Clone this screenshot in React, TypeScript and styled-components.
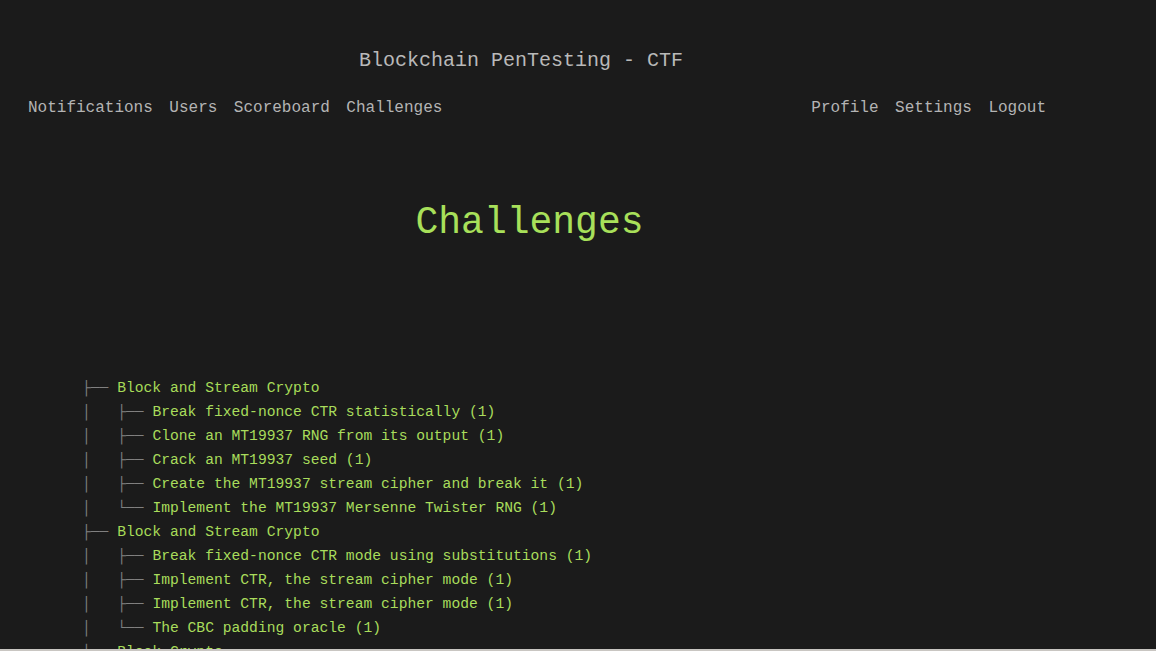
import React from "react";
import styled, { createGlobalStyle } from "styled-components";

const Global = createGlobalStyle`
  html, body {
    margin: 0;
    padding: 0;
    background: #1b1b1b;
  }
  body {
    font-family: "Liberation Mono", "DejaVu Sans Mono", monospace;
    overflow: hidden;
  }
`;

const Page = styled.div`
  min-height: 651px;
  background: #1b1b1b;
`;

const Header = styled.header`
  display: flex;
  flex-direction: column;
  padding-top: 49px;
`;

const SiteTitle = styled.div`
  width: 1042px;
  text-align: center;
  font-size: 20px;
  line-height: 24px;
  color: #b9b9b9;
`;

const NavBar = styled.nav`
  display: flex;
  justify-content: space-between;
  width: 1018px;
  margin-left: 28px;
  margin-top: 25px;
`;

const NavGroup = styled.div`
  display: flex;
  gap: 16.5px;
`;

const NavLink = styled.a`
  font-size: 16px;
  line-height: 20px;
  color: #b4b4b4;
  text-decoration: none;
`;

const Heading = styled.h1`
  margin: 82px 0 0;
  width: 1059px;
  text-align: center;
  font-size: 38px;
  line-height: 46px;
  font-weight: normal;
  color: #a8e05a;
`;

const Tree = styled.div`
  margin-top: 130px;
  padding-left: 82px;
  font-size: 14.67px;
  line-height: 24px;
  white-space: pre;
`;

const Row = styled.div`
  height: 24px;
`;

const Branch = styled.span`
  color: #808080;
`;

const Label = styled.span<{ $cat?: boolean }>`
  color: ${(p) => (p.$cat ? "#a7dc58" : "#a9dd5c")};
`;

const BottomEdge = styled.div`
  position: fixed;
  left: 0;
  right: 0;
  bottom: 0;
  height: 2px;
  background: #c9c6c2;
`;

type Cat = { name: string; items: string[] };

const data: Cat[] = [
  {
    name: "Block and Stream Crypto",
    items: [
      "Break fixed-nonce CTR statistically (1)",
      "Clone an MT19937 RNG from its output (1)",
      "Crack an MT19937 seed (1)",
      "Create the MT19937 stream cipher and break it (1)",
      "Implement the MT19937 Mersenne Twister RNG (1)",
    ],
  },
  {
    name: "Block and Stream Crypto",
    items: [
      "Break fixed-nonce CTR mode using substitutions (1)",
      "Implement CTR, the stream cipher mode (1)",
      "Implement CTR, the stream cipher mode (1)",
      "The CBC padding oracle (1)",
    ],
  },
  {
    name: "Block Crypto",
    items: [
      "An ECB/CBC detection oracle (1)",
      "Byte-at-a-time ECB decryption (1)",
    ],
  },
];

export default function App() {
  return (
    <Page>
      <Global />
      <Header>
        <SiteTitle>Blockchain PenTesting - CTF</SiteTitle>
        <NavBar>
          <NavGroup>
            <NavLink>Notifications</NavLink>
            <NavLink>Users</NavLink>
            <NavLink>Scoreboard</NavLink>
            <NavLink>Challenges</NavLink>
          </NavGroup>
          <NavGroup>
            <NavLink>Profile</NavLink>
            <NavLink>Settings</NavLink>
            <NavLink>Logout</NavLink>
          </NavGroup>
        </NavBar>
      </Header>
      <Heading>Challenges</Heading>
      <Tree>
        {data.map((cat, ci) => {
          const lastCat = ci === data.length - 1;
          return (
            <React.Fragment key={ci}>
              <Row>
                <Branch>{lastCat ? "└── " : "├── "}</Branch>
                <Label $cat>{cat.name}</Label>
              </Row>
              {cat.items.map((it, ii) => (
                <Row key={ii}>
                  <Branch>
                    {(lastCat ? "    " : "│   ") +
                      (ii === cat.items.length - 1 ? "└── " : "├── ")}
                  </Branch>
                  <Label>{it}</Label>
                </Row>
              ))}
            </React.Fragment>
          );
        })}
      </Tree>
      <BottomEdge />
    </Page>
  );
}
